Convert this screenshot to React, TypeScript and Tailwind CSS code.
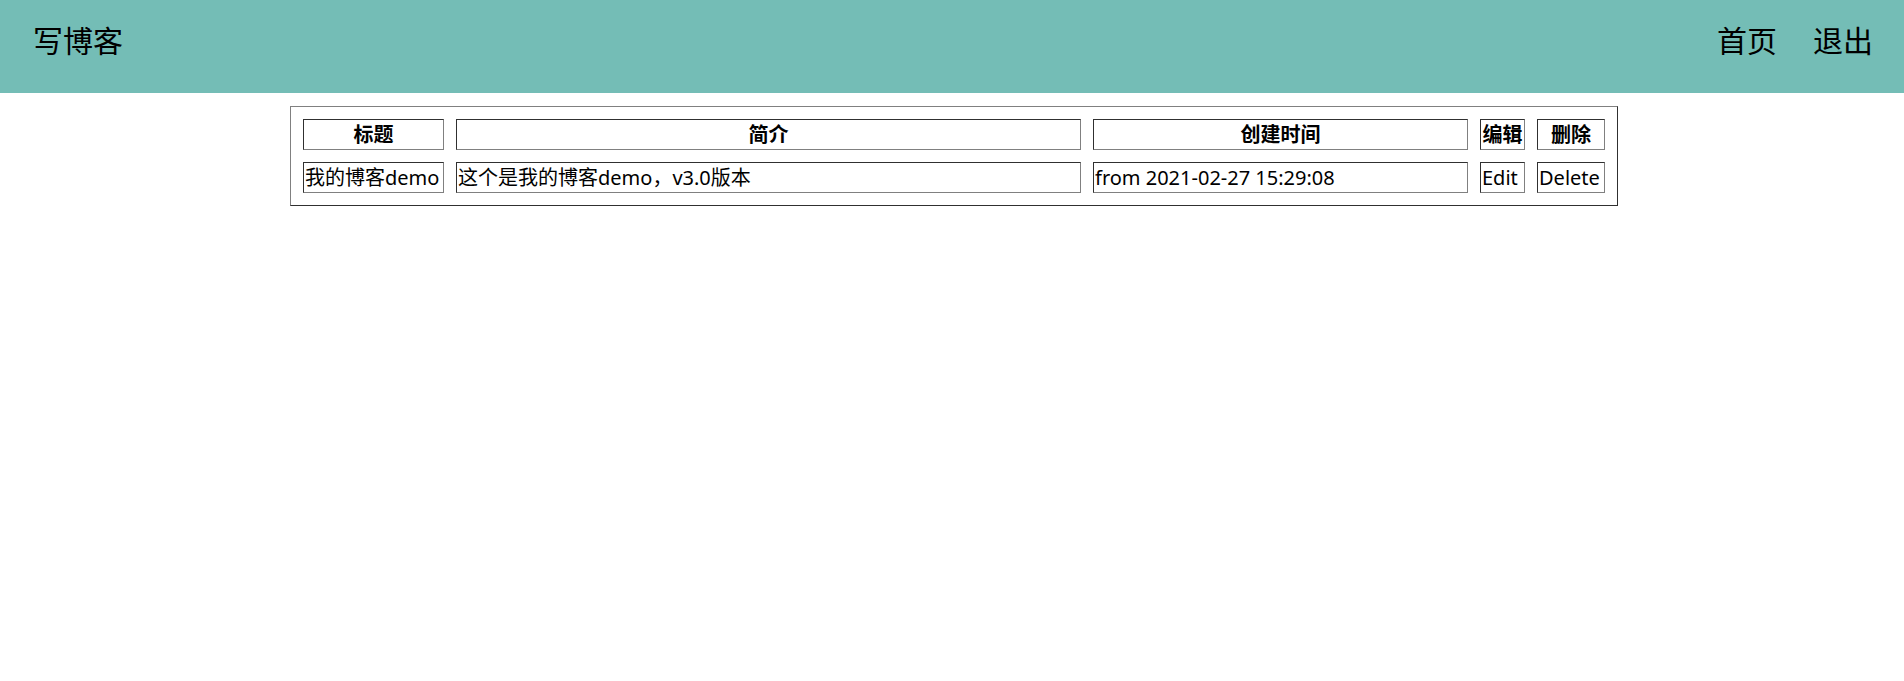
import React from "react";

const cellBase =
  "border border-t-[#303030] border-l-[#303030] border-b-[#808080] border-r-[#808080] h-[31px] p-px leading-[27px] text-[20px] align-middle whitespace-nowrap overflow-hidden";

export default function App() {
  return (
    <div
      className="min-h-[681px] bg-white text-black"
      style={{ fontFamily: '"Noto Sans", "Noto Sans CJK SC", sans-serif' }}
    >
      <header className="h-[93px] bg-[#74bdb6] flex items-center justify-between pl-[33px] pr-[31px]">
        <div className="text-[30px] leading-[40px] pb-[11px]">写博客</div>
        <nav className="flex items-center gap-[36px] text-[30px] leading-[40px] pb-[11px]">
          <a className="cursor-pointer">首页</a>
          <a className="cursor-pointer">退出</a>
        </nav>
      </header>
      <div className="pt-[13px] pl-[290px]">
        <table className="table-fixed w-[1328px] border-separate border-spacing-3 border border-t-[#808080] border-l-[#808080] border-b-[#303030] border-r-[#303030]">
          <thead>
            <tr>
              <th className={`${cellBase} w-[141px] font-bold text-center`}>标题</th>
              <th className={`${cellBase} w-[625px] font-bold text-center`}>简介</th>
              <th className={`${cellBase} w-[375px] font-bold text-center`}>创建时间</th>
              <th className={`${cellBase} w-[45px] font-bold text-center`}>编辑</th>
              <th className={`${cellBase} w-[68px] font-bold text-center`}>删除</th>
            </tr>
          </thead>
          <tbody>
            <tr>
              <td className={`${cellBase} text-left`}>我的博客demo</td>
              <td className={`${cellBase} text-left`}>这个是我的博客demo，v3.0版本</td>
              <td className={`${cellBase} text-left`}>from 2021-02-27 15:29:08</td>
              <td className={`${cellBase} text-left`}>Edit</td>
              <td className={`${cellBase} text-left`}>Delete</td>
            </tr>
          </tbody>
        </table>
      </div>
    </div>
  );
}
